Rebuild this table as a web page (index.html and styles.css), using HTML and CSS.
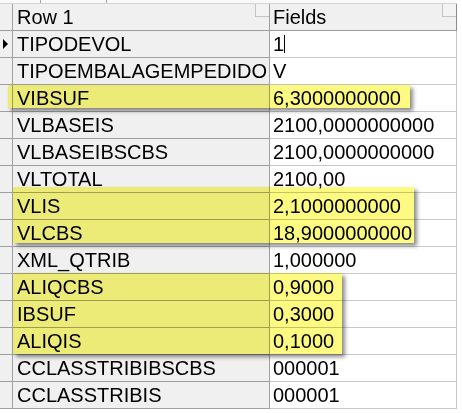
FILE: index.html
```html
<!DOCTYPE html>
<html>
<head>
<meta charset="utf-8">
<link rel="stylesheet" href="styles.css">
</head>
<body>
<div class="grid">
  <div class="strip">
    <span class="tick t1"></span><span class="tick t2"></span>
  </div>
  <div class="row head">
    <div class="ind"></div>
    <div class="name">Row 1<span class="corner"></span></div>
    <div class="val">Fields<span class="corner"></span></div>
  </div>
  <div class="row">
    <div class="ind"><span class="arrow"></span></div>
    <div class="name">TIPODEVOL</div>
    <div class="val">1<span class="caret"></span></div>
  </div>
  <div class="row"><div class="ind"></div><div class="name">TIPOEMBALAGEMPEDIDO</div><div class="val">V</div></div>
  <div class="row"><div class="ind"></div><div class="name">VIBSUF</div><div class="val">6,3000000000</div></div>
  <div class="row"><div class="ind"></div><div class="name">VLBASEIS</div><div class="val">2100,0000000000</div></div>
  <div class="row"><div class="ind"></div><div class="name">VLBASEIBSCBS</div><div class="val">2100,0000000000</div></div>
  <div class="row"><div class="ind"></div><div class="name">VLTOTAL</div><div class="val">2100,00</div></div>
  <div class="row"><div class="ind"></div><div class="name">VLIS</div><div class="val">2,1000000000</div></div>
  <div class="row"><div class="ind"></div><div class="name">VLCBS</div><div class="val">18,9000000000</div></div>
  <div class="row"><div class="ind"></div><div class="name">XML_QTRIB</div><div class="val">1,000000</div></div>
  <div class="row"><div class="ind"></div><div class="name">ALIQCBS</div><div class="val">0,9000</div></div>
  <div class="row"><div class="ind"></div><div class="name">IBSUF</div><div class="val">0,3000</div></div>
  <div class="row"><div class="ind"></div><div class="name">ALIQIS</div><div class="val">0,1000</div></div>
  <div class="row"><div class="ind"></div><div class="name">CCLASSTRIBIBSCBS</div><div class="val">000001</div></div>
  <div class="row"><div class="ind"></div><div class="name">CCLASSTRIBIS</div><div class="val">000001</div></div>

  <div class="hl hl1"></div>
  <div class="hl hl2"></div>
  <div class="hl hl3"></div>
</div>
</body>
</html>
```

FILE: styles.css
```css
html, body {
  margin: 0;
  padding: 0;
  background: #ffffff;
}
body {
  width: 462px;
  height: 413px;
  overflow: hidden;
  font-family: "Liberation Sans", Arial, sans-serif;
  font-size: 20px;
  color: #000;
}
.grid {
  position: relative;
  width: 457px;
}
.strip {
  position: relative;
  height: 4px;
  background: #f9f9f9;
  box-sizing: border-box;
  box-shadow: inset 0 -1px 0 #d4d4d4;
}
.tick {
  position: absolute;
  top: 0;
  width: 1px;
  height: 3px;
  background: #a8a8a8;
}
.t1 { left: 40px; }
.t2 { left: 106px; }
.row {
  display: flex;
  height: 27px;
  box-sizing: border-box;
}
.ind {
  position: relative;
  width: 13px;
  flex: none;
  background: #f0f0f0;
  border-right: 1px solid #a0a0a0;
  border-bottom: 1px solid #a0a0a0;
  box-sizing: border-box;
}
.name {
  position: relative;
  width: 257px;
  flex: none;
  background: #f0f0f0;
  border-right: 1px solid #a0a0a0;
  border-bottom: 1px solid #a0a0a0;
  box-sizing: border-box;
  padding-left: 4px;
  line-height: 26px;
  white-space: nowrap;
  overflow: hidden;
}
.val {
  position: relative;
  width: 187px;
  flex: none;
  background: #ffffff;
  border-right: 1px solid #c8c8c8;
  border-bottom: 1px solid #c8c8c8;
  box-sizing: border-box;
  padding-left: 3px;
  line-height: 26px;
  white-space: nowrap;
  overflow: hidden;
}
.head .ind,
.head .name,
.head .val {
  background: #f0f0f0;
  border-bottom-color: #9c9c9c;
}
.head .val {
  border-right-color: #8c8c8c;
}
.corner {
  position: absolute;
  right: 0;
  top: 0;
  width: 13px;
  height: 12px;
  border-left: 1px solid #c4c4c4;
  border-bottom: 1px solid #c4c4c4;
  background: #f3f3f3;
}
.arrow {
  position: absolute;
  left: 3px;
  top: 8px;
  width: 5px;
  height: 10px;
  background: #000;
  clip-path: polygon(0 0, 100% 50%, 0 100%);
}
.caret {
  position: absolute;
  left: 14px;
  top: 4px;
  width: 1px;
  height: 18px;
  background: #000;
}
.hl {
  position: absolute;
  background: #fcfa80;
  mix-blend-mode: multiply;
  box-shadow: 3px 3px 4px rgba(0, 0, 0, 0.45);
}
.hl1 { left: 8px; top: 85px; width: 402px; height: 23px; }
.hl2 { left: 13px; top: 187px; width: 401px; height: 56px; }
.hl3 { left: 13px; top: 273px; width: 329px; height: 81px; }
```
